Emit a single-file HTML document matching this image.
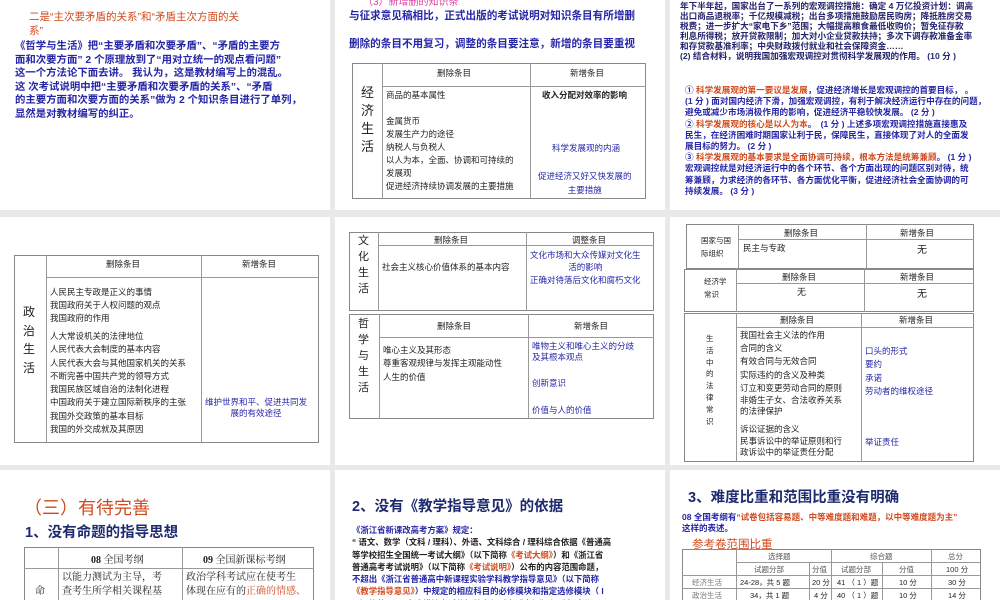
<!DOCTYPE html>
<html><head><meta charset="utf-8"><style>
*{margin:0;padding:0;box-sizing:border-box}
body{width:1000px;height:600px;background:#e9e9e9;position:relative;overflow:hidden;font-family:"Liberation Sans","Noto Sans CJK SC",sans-serif}
.p{position:absolute;background:#fff;overflow:hidden}
.t{position:absolute;white-space:nowrap}
.b{position:absolute;border:1px solid #888}
.h{position:absolute;height:1px;background:#999}
.v{position:absolute;width:1px;background:#999}
.bl{color:#2626a8}
.rd{color:#d04a1e}
.nv{color:#1e2a6e}
.k{color:#222}
</style></head><body>

<!-- P1 -->
<div class="p" style="left:0;top:0;width:330px;height:210px">
<div class="t rd" style="left:29px;top:11px;font-size:10.5px;line-height:13.5px">二是“主次要矛盾的关系”和“矛盾主次方面的关<br>系”</div>
<div class="t bl" style="left:15px;top:40px;font-size:10.4px;line-height:13.6px;font-weight:bold">《哲学与生活》把“主要矛盾和次要矛盾”、“矛盾的主要方<br>面和次要方面” 2 个原理放到了“用对立统一的观点看问题”<br>这一个方法论下面去讲。 我认为，这是教材编写上的混乱。<br>这 次考试说明中把“主要矛盾和次要矛盾的关系”、“矛盾<br>的主要方面和次要方面的关系”做为 2 个知识条目进行了单列，<br>显然是对教材编写的纠正。</div>
</div>

<!-- P2 -->
<div class="p" style="left:335px;top:0;width:330px;height:210px">
<div class="t" style="left:28px;top:-7px;font-size:10px;color:#e040a0">（3）新增删的知识条</div>
<div class="t bl" style="left:14px;top:8px;font-size:10.6px;font-weight:bold">与征求意见稿相比，正式出版的考试说明对知识条目有所增删</div>
<div class="t bl" style="left:14px;top:36px;font-size:10.6px;font-weight:bold">删除的条目不用复习，调整的条目要注意，新增的条目要重视</div>
<div class="b" style="left:17px;top:63px;width:294px;height:136px"></div>
<div class="v" style="left:47px;top:63px;height:136px"></div>
<div class="v" style="left:195px;top:63px;height:136px"></div>
<div class="h" style="left:47px;top:86px;width:264px"></div>
<div class="t k" style="left:26px;top:84px;font-size:13px;line-height:18px">经<br>济<br>生<br>活</div>
<div class="t k" style="left:102px;top:67px;font-size:8.5px">删除条目</div>
<div class="t k" style="left:235px;top:67px;font-size:8.5px">新增条目</div>
<div class="t k" style="left:51px;top:89px;font-size:8.5px;line-height:13px">商品的基本属性<br><br>金属货币<br>发展生产力的途径<br>纳税人与负税人<br>以人为本，全面、协调和可持续的<br>发展观<br>促进经济持续协调发展的主要措施</div>
<div class="t k" style="left:207px;top:89px;font-size:8.5px;font-weight:bold">收入分配对效率的影响</div>
<div class="t bl" style="left:217px;top:142px;font-size:8.5px">科学发展观的内涵</div>
<div class="t bl" style="left:203px;top:169px;font-size:8.5px;line-height:14px;text-align:center">促进经济又好又快发展的<br>主要措施</div>
</div>

<!-- P3 -->
<div class="p" style="left:670px;top:0;width:330px;height:210px">
<div class="t" style="left:10px;top:1px;font-size:8.6px;line-height:10px;color:#24246e;font-weight:bold">年下半年起，国家出台了一系列的宏观调控措施：确定 4 万亿投资计划：调高<br>出口商品退税率；千亿规模减税；出台多项措施鼓励居民购房；降抵胜房交易<br>税费；进一步扩大“家电下乡”范围；大幅提高粮食最低收购价；暂免征存款<br>利息所得税；放开贷款限制；加大对小企业贷款扶持；多次下调存款准备金率<br>和存贷款基准利率；中央财政拨付就业和社会保障资金……<br>(2) 结合材料，说明我国加强宏观调控对贯彻科学发展观的作用。 (10 分 )</div>
<div class="t bl" style="left:15px;top:85px;font-size:8.6px;line-height:11.2px;font-weight:bold">① <span class="rd">科学发展观的第一要议是发展</span>，促进经济增长是宏观调控的首要目标， 。<br>(1 分 ) 面对国内经济下滑，加强宏观调控，有利于解决经济运行中存在的问题，<br>避免或减少市场消极作用的影响，促进经济平稳较快发展。 (2 分 )<br>② <span class="rd">科学发展观的核心是以人为本</span>。　(1 分 ) 上述多项宏观调控措施直接惠及<br>民生，在经济困难时期国家让利于民，保障民生，直接体现了对人的全面发<br>展目标的努力。 (2 分 )<br>③ <span class="rd">科学发展观的基本要求是全面协调可持续，根本方法是统筹兼顾</span>。 (1 分 )<br>宏观调控就是对经济运行中的各个环节、各个方面出现的问题区别对待，统<br>筹兼顾，力求经济的各环节、各方面优化平衡，促进经济社会全面协调的可<br>持续发展。 (3 分 )</div>
</div>

<!-- P4 -->
<div class="p" style="left:0;top:217px;width:330px;height:248px">
<div class="b" style="left:14px;top:38px;width:305px;height:188px"></div>
<div class="v" style="left:46px;top:38px;height:188px"></div>
<div class="v" style="left:201px;top:38px;height:188px"></div>
<div class="h" style="left:46px;top:60px;width:273px"></div>
<div class="t k" style="left:23px;top:86px;font-size:12px;line-height:18.5px">政<br>治<br>生<br>活</div>
<div class="t k" style="left:106px;top:41px;font-size:8.5px">删除条目</div>
<div class="t k" style="left:242px;top:41px;font-size:8.5px">新增条目</div>
<div class="t k" style="left:50px;top:69px;font-size:8.5px;line-height:13.2px">人民民主专政是正义的事情<br>我国政府关于人权问题的观点<br>我国政府的作用</div>
<div class="t k" style="left:50px;top:113px;font-size:8.5px;line-height:13.3px">人大常设机关的法律地位<br>人民代表大会制度的基本内容<br>人民代表大会与其他国家机关的关系<br>不断完善中国共产党的领导方式<br>我国民族区域自治的法制化进程<br>中国政府关于建立国际新秩序的主张<br>我国外交政策的基本目标<br>我国的外交成就及其原因</div>
<div class="t bl" style="left:205px;top:180px;font-size:8.5px;line-height:11px;text-align:center">维护世界和平、促进共同发<br>展的有效途径</div>
</div>

<!-- P5 -->
<div class="p" style="left:335px;top:217px;width:330px;height:248px">
<div class="b" style="left:14px;top:15px;width:305px;height:79px"></div>
<div class="v" style="left:43px;top:15px;height:79px"></div>
<div class="v" style="left:191px;top:15px;height:79px"></div>
<div class="h" style="left:43px;top:28px;width:276px"></div>
<div class="t k" style="left:23px;top:16px;font-size:11px;line-height:16px">文<br>化<br>生<br>活</div>
<div class="t k" style="left:99px;top:17px;font-size:8.5px">删除条目</div>
<div class="t k" style="left:237px;top:17px;font-size:8.5px">调整条目</div>
<div class="t k" style="left:47px;top:44px;font-size:8.5px">社会主义核心价值体系的基本内容</div>
<div class="t bl" style="left:195px;top:32px;font-size:8.5px;line-height:12px;text-align:center">文化市场和大众传媒对文化生<br>活的影响</div>
<div class="t bl" style="left:195px;top:57px;font-size:8.5px">正确对待落后文化和腐朽文化</div>
<div class="b" style="left:14px;top:97px;width:305px;height:105px"></div>
<div class="v" style="left:44px;top:97px;height:105px"></div>
<div class="v" style="left:193px;top:97px;height:105px"></div>
<div class="h" style="left:44px;top:120px;width:275px"></div>
<div class="t k" style="left:23px;top:99px;font-size:11px;line-height:16px">哲<br>学<br>与<br>生<br>活</div>
<div class="t k" style="left:102px;top:103px;font-size:8.5px">删除条目</div>
<div class="t k" style="left:239px;top:103px;font-size:8.5px">新增条目</div>
<div class="t k" style="left:48px;top:127px;font-size:8.5px;line-height:13.3px">唯心主义及其形态<br>尊重客观规律与发挥主观能动性<br>人生的价值</div>
<div class="t bl" style="left:197px;top:124px;font-size:8.5px;line-height:11px">唯物主义和唯心主义的分歧<br>及其根本观点</div>
<div class="t bl" style="left:197px;top:160px;font-size:8.5px">创新意识</div>
<div class="t bl" style="left:197px;top:187px;font-size:8.5px">价值与人的价值</div>
</div>

<!-- P6 -->
<div class="p" style="left:670px;top:217px;width:330px;height:248px">
<div class="b" style="left:16px;top:7px;width:288px;height:45px"></div>
<div class="v" style="left:68px;top:7px;height:45px"></div>
<div class="v" style="left:196px;top:7px;height:45px"></div>
<div class="h" style="left:68px;top:22px;width:236px"></div>
<div class="t k" style="left:31px;top:17px;font-size:7.5px;line-height:13px">国家与国<br>际组织</div>
<div class="t k" style="left:114px;top:10px;font-size:8.5px">删除条目</div>
<div class="t k" style="left:230px;top:10px;font-size:8.5px">新增条目</div>
<div class="t k" style="left:73px;top:25px;font-size:8.5px">民主与专政</div>
<div class="t k" style="left:247px;top:24px;font-size:10px">无</div>
<div class="b" style="left:14px;top:52px;width:290px;height:43px"></div>
<div class="v" style="left:66px;top:52px;height:43px"></div>
<div class="v" style="left:194px;top:52px;height:43px"></div>
<div class="h" style="left:66px;top:66px;width:238px"></div>
<div class="t k" style="left:34px;top:58px;font-size:7.5px;line-height:13px">经济学<br>常识</div>
<div class="t k" style="left:112px;top:54px;font-size:8.5px">删除条目</div>
<div class="t k" style="left:230px;top:54px;font-size:8.5px">新增条目</div>
<div class="t k" style="left:127px;top:68px;font-size:9px">无</div>
<div class="t k" style="left:247px;top:68px;font-size:10px">无</div>
<div class="b" style="left:14px;top:96px;width:290px;height:149px"></div>
<div class="v" style="left:66px;top:96px;height:149px"></div>
<div class="v" style="left:191px;top:96px;height:149px"></div>
<div class="h" style="left:66px;top:110px;width:238px"></div>
<div class="t k" style="left:36px;top:116px;font-size:7.5px;line-height:11.8px">生<br>活<br>中<br>的<br>法<br>律<br>常<br>识</div>
<div class="t k" style="left:110px;top:97px;font-size:8.5px">删除条目</div>
<div class="t k" style="left:229px;top:97px;font-size:8.5px">新增条目</div>
<div class="t k" style="left:70px;top:112px;font-size:8.5px;line-height:13.2px">我国社会主义法的作用<br>合同的含义<br>有效合同与无效合同<br>实际违约的含义及种类<br>订立和变更劳动合同的原则</div>
<div class="t k" style="left:70px;top:178px;font-size:8.5px;line-height:11px">非婚生子女、合法收养关系<br>的法律保护</div>
<div class="t k" style="left:70px;top:207px;font-size:8.5px;line-height:11.5px">诉讼证据的含义<br>民事诉讼中的举证原则和行<br>政诉讼中的举证责任分配</div>
<div class="t bl" style="left:195px;top:128px;font-size:8.5px;line-height:13.3px">口头的形式<br>要约<br>承诺<br>劳动者的维权途径</div>
<div class="t bl" style="left:195px;top:219px;font-size:8.5px">举证责任</div>
</div>

<!-- P7 -->
<div class="p" style="left:0;top:470px;width:330px;height:130px">
<div class="t rd" style="left:24px;top:24px;font-size:18px;color:#d04a1e">（三）有待完善</div>
<div class="t nv" style="left:25px;top:51px;font-size:14.5px;font-weight:bold">1、没有命题的指导思想</div>
<div class="b" style="left:24px;top:77px;width:290px;height:60px"></div>
<div class="v" style="left:58px;top:77px;height:60px"></div>
<div class="v" style="left:182px;top:77px;height:60px"></div>
<div class="h" style="left:24px;top:98px;width:290px"></div>
<div class="t k" style="left:91px;top:81px;font-size:10px;font-family:'Liberation Serif','Noto Serif CJK SC',serif"><b>08</b> 全国考纲</div>
<div class="t k" style="left:203px;top:81px;font-size:10px;font-family:'Liberation Serif','Noto Serif CJK SC',serif"><b>09</b> 全国新课标考纲</div>
<div class="t k" style="left:35px;top:112px;font-size:10px;font-family:'Liberation Serif','Noto Serif CJK SC',serif">命</div>
<div class="t k" style="left:62px;top:101px;font-size:10px;line-height:14px;font-family:'Liberation Serif','Noto Serif CJK SC',serif">以能力测试为主导，考<br>查考生所学相关课程基</div>
<div class="t k" style="left:186px;top:101px;font-size:10px;line-height:14px;font-family:'Liberation Serif','Noto Serif CJK SC',serif">政治学科考试应在使考生<br>体现在应有的<span class="rd">正确的情感、</span></div>
</div>

<!-- P8 -->
<div class="p" style="left:335px;top:470px;width:330px;height:130px">
<div class="t nv" style="left:17px;top:25px;font-size:14.5px;font-weight:bold">2、没有《教学指导意见》的依据</div>
<div class="t k" style="left:17px;top:54px;font-size:8.4px;line-height:12.3px;font-weight:bold"><span class="bl">《浙江省新课改高考方案》规定：</span><br>“ 语文、数学（文科 / 理科）、外语、文科综合 / 理科综合依据《普通高<br>等学校招生全国统一考试大纲》（以下简称<span class="rd">《考试大纲》</span>）和《浙江省<br>普通高考考试说明》（以下简称<span class="rd">《考试说明》</span>）公布的内容范围命题，<br><span class="bl">不超出《浙江省普通高中新课程实验学科教学指导意见》（以下简称<br><span class="rd">《教学指导意见》</span>）中规定的相应科目的必修模块和指定选修模块（ I<br>A ）的范围。”</span>“自选模块考试依据教育部《考试大纲》和《考试说</div>
</div>

<!-- P9 -->
<div class="p" style="left:670px;top:470px;width:330px;height:130px">
<div class="t nv" style="left:18px;top:16px;font-size:14.5px;font-weight:bold">3、难度比重和范围比重没有明确</div>
<div class="t bl" style="left:12px;top:42px;font-size:8.5px;line-height:11px;font-weight:bold">08 全国考纲有<span class="rd">“试卷包括容易题、中等难度题和难题，以中等难度题为主”</span><br>这样的表述。</div>
<div class="t rd" style="left:22px;top:66px;font-size:11.5px">参考卷范围比重</div>
<div class="b" style="left:12px;top:79px;width:299px;height:60px"></div>
<div class="v" style="left:66px;top:79px;height:60px"></div>
<div class="v" style="left:139px;top:92px;height:47px"></div>
<div class="v" style="left:161px;top:79px;height:60px"></div>
<div class="v" style="left:212px;top:92px;height:47px"></div>
<div class="v" style="left:261px;top:79px;height:60px"></div>
<div class="h" style="left:66px;top:92px;width:245px"></div>
<div class="h" style="left:12px;top:105px;width:299px"></div>
<div class="h" style="left:12px;top:118px;width:299px"></div>
<div class="t" style="left:98px;top:81px;font-size:7.5px;color:#555">选择题</div>
<div class="t" style="left:200px;top:81px;font-size:7.5px;color:#555">综合题</div>
<div class="t" style="left:278px;top:81px;font-size:7.5px;color:#555">总分</div>
<div class="t" style="left:84px;top:94px;font-size:7.5px;color:#555">试题分部</div>
<div class="t" style="left:142px;top:94px;font-size:7.5px;color:#555">分值</div>
<div class="t" style="left:171px;top:94px;font-size:7.5px;color:#555">试题分部</div>
<div class="t" style="left:229px;top:94px;font-size:7.5px;color:#555">分值</div>
<div class="t" style="left:276px;top:94px;font-size:7.5px;color:#333">100 分</div>
<div class="t" style="left:22px;top:107px;font-size:7.5px;color:#777">经济生活</div>
<div class="t k" style="left:70px;top:107px;font-size:7.5px">24-28，共 5 题</div>
<div class="t k" style="left:142px;top:107px;font-size:7.5px">20 分</div>
<div class="t k" style="left:167px;top:107px;font-size:7.5px">41 （ 1 ）题</div>
<div class="t k" style="left:229px;top:107px;font-size:7.5px">10 分</div>
<div class="t k" style="left:278px;top:107px;font-size:7.5px">30 分</div>
<div class="t" style="left:22px;top:120px;font-size:7.5px;color:#777">政治生活</div>
<div class="t k" style="left:80px;top:120px;font-size:7.5px">34，共 1 题</div>
<div class="t k" style="left:144px;top:120px;font-size:7.5px">4 分</div>
<div class="t k" style="left:167px;top:120px;font-size:7.5px">40 （ 1 ）题</div>
<div class="t k" style="left:229px;top:120px;font-size:7.5px">10 分</div>
<div class="t k" style="left:278px;top:120px;font-size:7.5px">14 分</div>
</div>

</body></html>
